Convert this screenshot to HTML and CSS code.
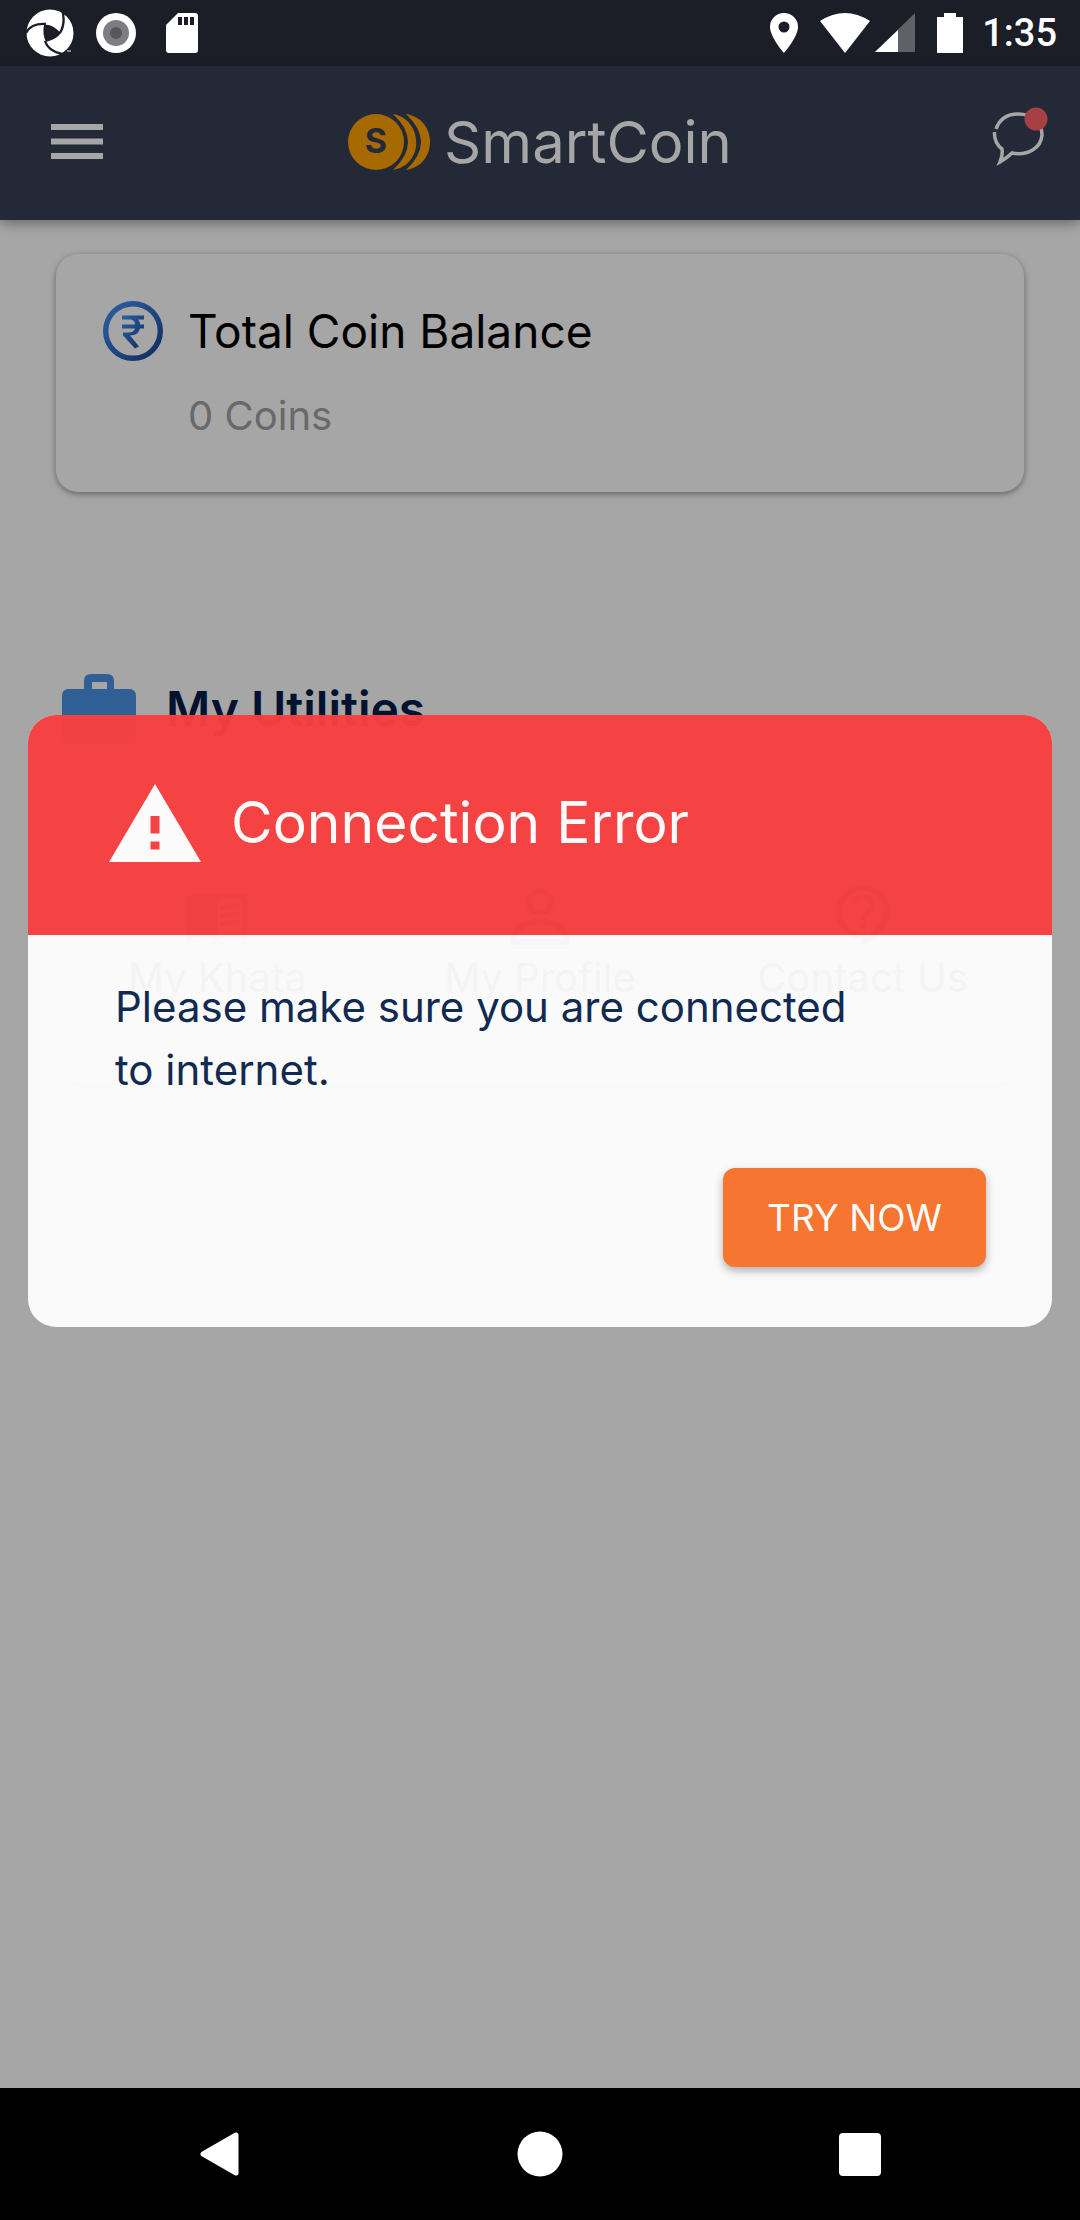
FILE: index.html
```html
<!DOCTYPE html>
<html lang="en">
<head>
<meta charset="utf-8">
<meta name="viewport" content="width=device-width, initial-scale=1">
<title>SmartCoin</title>
<link rel="stylesheet" href="styles.css">
</head>
<body>
<div class="status-bar">
  <div class="status-group status-apps">
    <svg width="48" height="48" viewBox="0 0 48 48" aria-hidden="true">
      <circle cx="24" cy="24" r="23.5" fill="#fff"/>
      <path d="M18 16q7-2 17 8-4 6-15 9-4-8-2-17z" fill="#1b1e27"/>
      <path d="M0 24q5-10 20-9M36 0q4 14-2 24M19 32q3 10 17 13" fill="none" stroke="#1b1e27" stroke-width="2.4"/>
      <path d="M33 46l8-5 7-1v8H33z" fill="#1b1e27"/>
      <path d="M41 42h4" stroke="#aaa" stroke-width="1.5"/>
    </svg>
    <svg width="40" height="40" viewBox="0 0 40 40" aria-hidden="true">
      <circle cx="20" cy="20" r="20" fill="#fff"/><circle cx="20" cy="20" r="13" fill="#7d7e82"/><circle cx="20" cy="20" r="6" fill="#56575b"/>
    </svg>
    <svg width="32" height="40" viewBox="0 0 32 40" aria-hidden="true">
      <path d="M12 0h17q3 0 3 3v34q0 3-3 3H3q-3 0-3-3V12z" fill="#fff"/>
      <path d="M12 4h4v8h-4zM18 4h4v8h-4zM24 4h4v8h-4z" fill="#1b1e27"/>
    </svg>
  </div>
  <div class="status-group status-system">
    <svg class="pin" width="28" height="40" viewBox="0 0 28 40" aria-hidden="true">
      <path fill="#fff" fill-rule="evenodd" d="M14 0a14 14 0 0 1 14 14c0 10-14 26-14 26S0 24 0 14A14 14 0 0 1 14 0zm0 8.500a5.500 5.500 0 1 0 0 11 5.500 5.500 0 0 0 0-11z"/>
    </svg>
    <svg width="50" height="40" viewBox="0 0 50 40" aria-hidden="true"><path d="M0 8Q25-8 50 8L25 40z" fill="#fff"/></svg>
    <svg width="40" height="40" viewBox="0 0 40 40" aria-hidden="true"><path d="M40 0v39H0z" fill="#606166"/><path d="M23 17v22H0z" fill="#fff"/></svg>
    <svg class="battery" width="26" height="40" viewBox="0 0 26 40" aria-hidden="true"><path d="M7 0h12v4h7v36H0V4h7z" fill="#fff"/></svg>
    <time class="clock">1:35</time>
  </div>
</div>

<header class="app-bar">
  <button class="menu-button" type="button" aria-label="Menu">
    <svg width="52" height="36" viewBox="0 0 52 36"><path d="M0 0h52v6H0zM0 14.500h52v6H0zM0 29h52v6H0z" fill="#a6a6a6"/></svg>
  </button>
  <div class="brand">
    <svg width="82" height="56" viewBox="0 0 82 56" aria-hidden="true">
      <circle cx="28" cy="28" r="28" fill="#a66a00"/>
      <path d="M45 0C75 5 77 51 45 56Q75 28 45 0zM58 0C90 5 90 51 58 56Q88 28 58 0z" fill="#a66a00"/>
      <text x="28" y="39" text-anchor="middle" class="coin-letter">S</text>
    </svg>
    <span class="brand-name">SmartCoin</span>
  </div>
  <button class="chat-button" type="button" aria-label="Messages">
    <svg width="58" height="70" viewBox="0 0 58 70">
      <path d="M6 22C10 11 19 7 28 7C44 7 52 17 52 28C51 41 38 49 22 46Q17 51 10 55Q13 48 12 42Q4 36 4.500 25" fill="none" stroke="#a6a6a6" stroke-width="3.500"/>
      <circle cx="46" cy="12" r="11.500" fill="#a64042"/>
    </svg>
  </button>
</header>

<main class="content">
  <section class="card balance">
    <svg class="rupee" width="60" height="60" viewBox="0 0 60 60" aria-hidden="true">
      <defs><linearGradient id="blue" x1="0" y1="0" x2="1" y2="1"><stop offset="0" stop-color="#2a60a4"/><stop offset="1" stop-color="#142c5c"/></linearGradient></defs>
      <circle cx="30" cy="30" r="27.300" fill="none" stroke="url(#blue)" stroke-width="5.400"/>
      <path d="M19 14.500h22v4h-6q2 2 2 5h4v4h-4q-2 7-10 7l9 11-4 2-12-13v-3h5q6 0 7-4H19v-4h13q0-4-4-5h-9z" fill="url(#blue)"/>
    </svg>
    <div>
      <h2 class="balance-title">Total Coin Balance</h2>
      <p class="balance-value">0 Coins</p>
    </div>
  </section>

  <section class="utilities">
    <div class="utilities-head">
      <svg width="74" height="70" viewBox="0 0 74 70" aria-hidden="true">
        <path fill="#305f96" fill-rule="evenodd" d="M22 15V7q0-7 7-7h16q7 0 7 7v8h15q7 0 7 7v41q0 7-7 7H7q-7 0-7-7V22q0-7 7-7zm8 0h15V8H30z"/>
      </svg>
      <h2 class="utilities-title">My Utilities</h2>
    </div>
    <nav class="card utility-grid" aria-label="My Utilities">
      <a class="utility" href="#khata">
        <svg width="60" height="62" viewBox="0 0 60 62" aria-hidden="true">
          <path d="M0 12Q14 5 30 12Q45 5 60 12V56Q45 50 30 56Q15 50 0 56z" fill="#1c4580"/>
          <path d="M30 18Q43 11 55 16v35q-12-3-25 2z" fill="#a6a6a6"/>
          <path d="M33 25q9-5 19-2M33 33q9-5 19-2M33 41q9-5 19-2" fill="none" stroke="#1c4580" stroke-width="4"/>
        </svg>
        <span>My Khata</span>
      </a>
      <a class="utility" href="#profile">
        <svg width="58" height="62" viewBox="0 0 58 62" aria-hidden="true">
          <g fill="none" stroke="#1c4580" stroke-width="6"><circle cx="29" cy="18" r="11"/><path d="M3 58V53Q7 38 29 38T55 53v5z"/></g>
        </svg>
        <span>My Profile</span>
      </a>
      <a class="utility" href="#contact">
        <svg width="54" height="62" viewBox="0 0 54 62" aria-hidden="true">
          <path d="M27 52A24 24 0 1 1 51 28Q50 44 28 57z" fill="none" stroke="#1c4580" stroke-width="6"/>
          <path d="M18 21Q18 13 27 13T36 22C36 28 27 28 27 36M27 39v6" fill="none" stroke="#1c4580" stroke-width="5"/>
        </svg>
        <span>Contact Us</span>
      </a>
    </nav>
  </section>
</main>

<div class="system-nav">
  <button type="button" aria-label="Back"><svg width="46" height="46" viewBox="0 0 46 46"><path d="M39 4v38L6 23z" fill="#fff" stroke="#fff" stroke-width="5" stroke-linejoin="round"/></svg></button>
  <button type="button" aria-label="Home"><svg width="46" height="46" viewBox="0 0 46 46"><circle cx="23" cy="23" r="22.500" fill="#fff"/></svg></button>
  <button type="button" aria-label="Recent apps"><svg width="46" height="46" viewBox="0 0 46 46"><rect x="2" y="2" width="42" height="43" rx="4" fill="#fff"/></svg></button>
</div>

<div class="overlay">
  <div class="dialog" role="alertdialog" aria-labelledby="dialog-title" aria-describedby="dialog-text">
    <div class="dialog-head">
      <svg width="92" height="78" viewBox="0 0 92 78" aria-hidden="true"><path fill="#fff" fill-rule="evenodd" d="M46 0L92 78H0zM41.500 32v17.500h9V32zM41.500 57.500v8h9v-8z"/></svg>
      <h1 class="dialog-title" id="dialog-title">Connection Error</h1>
    </div>
    <div class="dialog-body">
      <p class="dialog-text" id="dialog-text">Please make sure you are connected<br>to internet.</p>
      <button class="try-button" type="button">TRY NOW</button>
    </div>
  </div>
</div>
</body>
</html>
```
FILE: styles.css
```css
* { box-sizing: border-box; }

body {
  margin: 0;
  min-height: 100vh;
  display: flex;
  flex-direction: column;
  background: #a6a6a6;
  color: #000;
  font-family: Inter, "Open Sans", sans-serif;
}

h1, h2, p { margin: 0; font-weight: 400; }
svg { display: block; flex: none; }
button { border: 0; padding: 0; background: none; font: inherit; color: inherit; }

.status-bar {
  display: flex;
  justify-content: space-between;
  align-items: center;
  height: 66px;
  padding: 0 23px 0 26px;
  background: #1b1e27;
}
.status-group { display: flex; align-items: center; }
.status-apps { gap: 22px; }
.status-apps svg:last-child { margin-left: 8px; }
.status-system { gap: 5px; }
.pin { margin-right: 17px; }
.battery { margin: 0 14px 0 17px; }
.clock {
  color: #fff;
  font: 500 38px/48px Roboto, sans-serif;
}

.app-bar {
  display: grid;
  grid-template-columns: 1fr auto 1fr;
  align-items: center;
  height: 154px;
  padding: 0 32px 2px;
  background: #242938;
  box-shadow: 0 4px 12px rgba(0, 0, 0, .35);
}
.menu-button { justify-self: start; padding-left: 19px; }
.chat-button { justify-self: end; }
.brand { display: flex; align-items: center; gap: 14px; }
.coin-letter { font: 700 34px Inter, sans-serif; fill: #242938; }
.brand-name { color: #a6a6a6; font-size: 58px; line-height: 64px; }

.content { flex: 1; padding: 34px 56px; }
.card {
  border-radius: 22px;
  box-shadow: 0 2px 6px rgba(0, 0, 0, .4);
}
.balance {
  display: flex;
  gap: 25px;
  min-height: 238px;
  padding: 47px;
}
.balance-title { font-size: 46px; line-height: 60px; }
.balance-value { margin-top: 27px; color: #696969; font-size: 40px; line-height: 56px; }

.utilities { padding-top: 178px; }
.utilities-head { display: flex; align-items: center; gap: 30px; padding: 0 6px; }
.utilities-title { color: #03122f; font-size: 48px; line-height: 78px; font-weight: 600; }
.utility-grid {
  display: grid;
  grid-template-columns: repeat(3, 1fr);
  min-height: 275px;
  margin-top: 60px;
  padding-top: 76px;
}
.utility {
  display: flex;
  flex-direction: column;
  align-items: center;
  gap: 4px;
  color: #000;
  font-size: 40px;
  line-height: 56px;
  text-decoration: none;
}

.system-nav {
  display: flex;
  justify-content: space-between;
  align-items: center;
  height: 132px;
  padding: 0 197px;
  background: #000;
}

.overlay {
  position: absolute;
  inset: 0;
  padding: 715px 28px 0;
}
.dialog {
  overflow: hidden;
  border-radius: 28px;
  background: #fefefe;
  opacity: .96;
}
.dialog-head {
  display: flex;
  align-items: center;
  gap: 30px;
  height: 220px;
  padding: 0 81px 4px;
  background: #f94040;
  color: #fff;
}
.dialog-title { font-size: 57px; line-height: 64px; }
.dialog-body {
  display: flex;
  flex-direction: column;
  align-items: flex-end;
  gap: 67px;
  padding: 40px 66px 60px 87px;
}
.dialog-text {
  align-self: stretch;
  color: #0b254e;
  font-size: 42px;
  line-height: 63px;
}
.try-button {
  height: 99px;
  padding: 0 44px;
  border-radius: 12px;
  background: #fa742c;
  box-shadow: 0 4px 8px rgba(0, 0, 0, .3);
  color: #fff;
  font-size: 37px;
  line-height: 48px;
}
```
